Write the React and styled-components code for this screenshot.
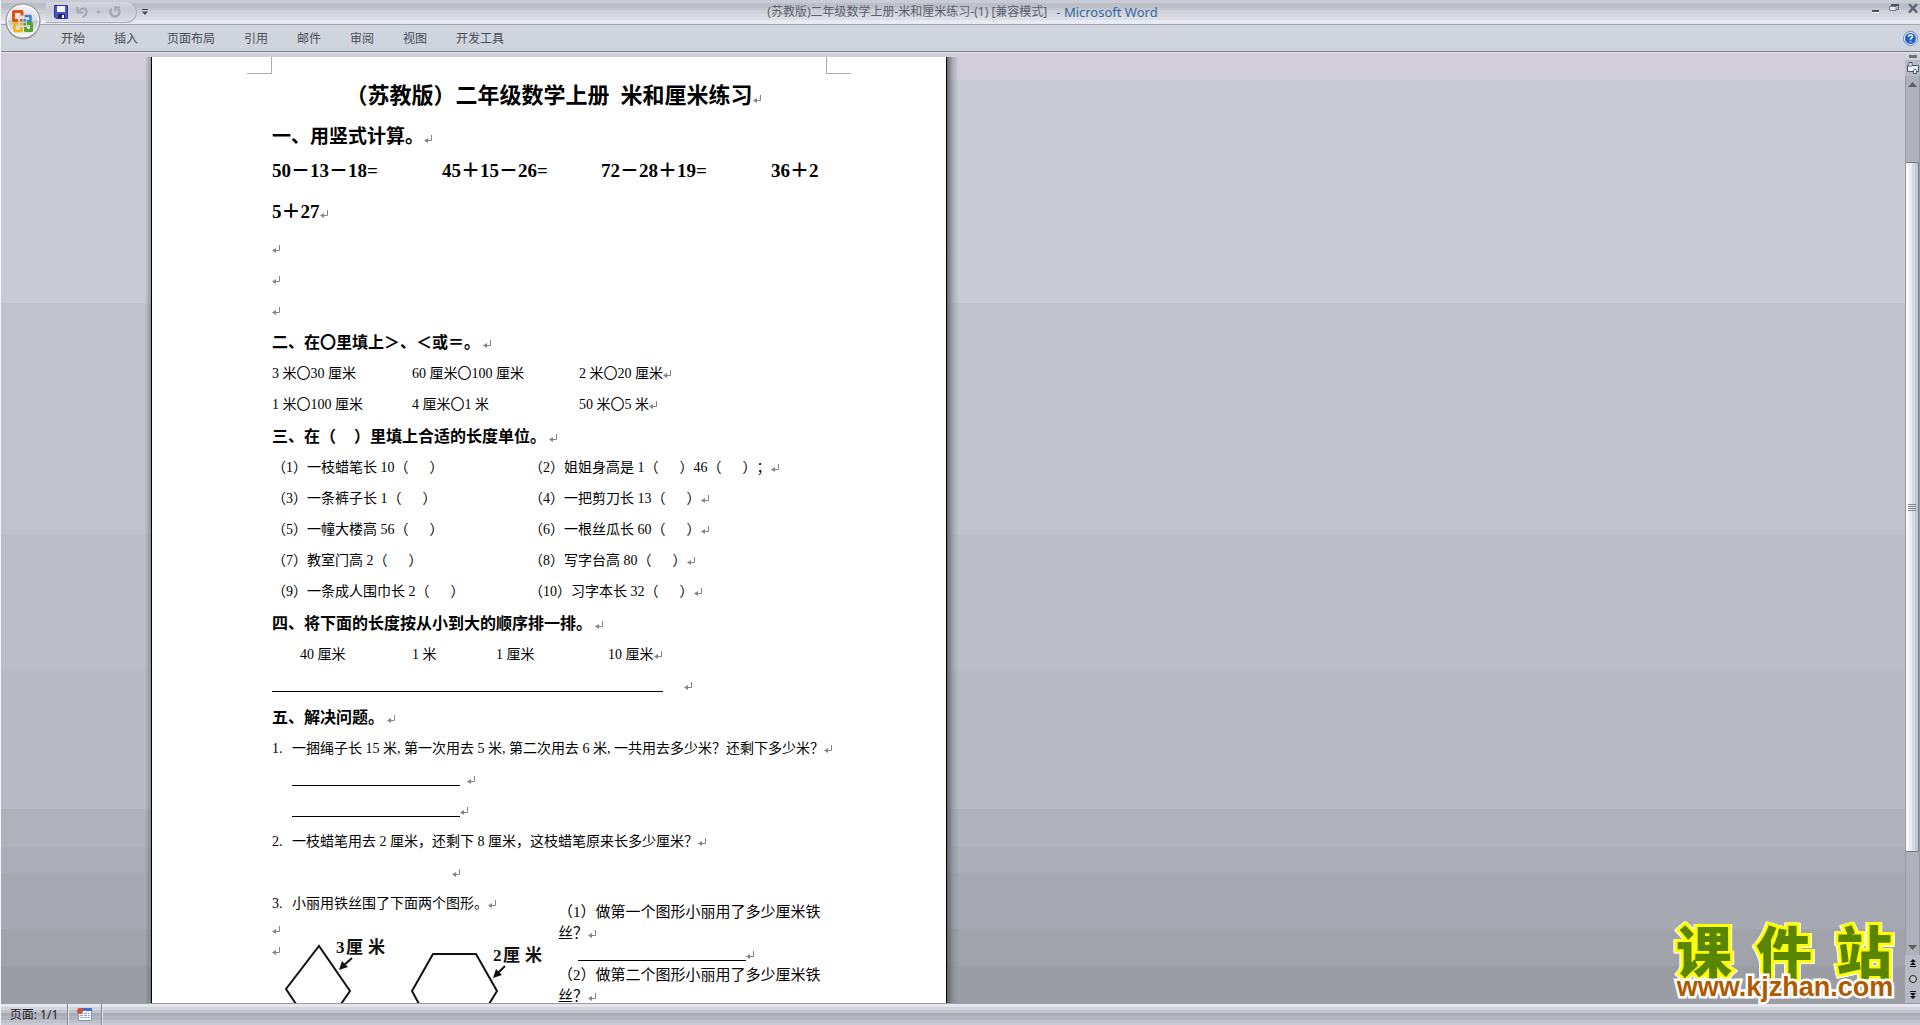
import React from "react";
import styled, { createGlobalStyle } from "styled-components";

const Global = createGlobalStyle`
  * { box-sizing: border-box; }
  html, body { margin: 0; padding: 0; overflow: hidden; }
  button { border: 0; padding: 0; margin: 0; background: none; font: inherit; color: inherit; }
  p, h1, h2, ol { margin: 0; padding: 0; font-weight: 400; }
`;

const Window = styled.div`
  display: flex;
  flex-direction: column;
  height: 100vh;
  border-left: 1px solid #f4f5f8;
  font-family: "Noto Sans", "Noto Sans CJK SC", sans-serif;
  font-size: 12px;
  color: #454b57;
`;

/* ---------- title bar and ribbon ---------- */

const TitleBar = styled.header`
  display: grid;
  grid-template-columns: 1fr auto 1fr;
  align-items: center;
  height: 25px;
  flex: none;
  border-bottom: 1px solid #a3a6af;
  background: linear-gradient(
    #c9ccd6 0 3px, #bcbfc8 3px 8px, #c3c6cf 8px 10px, #cdd0d8 10px 14px,
    #d5d8de 14px 17px, #dcdee3 17px 20px, #e7eaf3 20px
  );
`;

const QuickAccess = styled.div`
  display: flex;
  align-items: center;
  height: 24px;
  padding-left: 45px;
`;

const QuickPill = styled.div`
  display: flex;
  align-items: center;
  gap: 8px;
  height: 22px;
  padding: 0 15px 0 8px;
  border: 1px solid #aeb1bb;
  border-top-color: #c6c9d2;
  border-left: 0;
  border-radius: 0 11px 11px 0;
  background: linear-gradient(#d3d6de, #c7cad3 40%, #dcdfe6);
`;

const IconButton = styled.button`
  display: flex;
  align-items: center;
  justify-content: center;
`;

const MoreButton = styled(IconButton)`
  margin-left: 5px;
`;

const WindowTitle = styled.div`
  display: flex;
  gap: 9px;
  padding-left: 4px;
  line-height: 20px;
  white-space: pre;
  color: #5b616c;
`;

const AppName = styled.span`
  color: #3468a4;
  font-size: 13px;
`;

const WindowButtons = styled.div`
  display: flex;
  justify-content: flex-end;
  gap: 9px;
  padding: 0 2px 8px 0;
`;

const Ribbon = styled.nav`
  display: flex;
  align-items: center;
  justify-content: space-between;
  height: 28px;
  flex: none;
  padding: 0 2px 0 60px;
  background: #d0d4dd;
  border-bottom: 1px solid #e4e6ec;
  box-shadow: inset 0 -1px 0 #7a7f86;
`;

const Tabs = styled.div`
  display: flex;
  gap: 29px;
`;

const Tab = styled.button`
  line-height: 24px;
  color: #474d59;
`;

const OfficeButton = styled.button`
  position: absolute;
  left: 5px;
  top: 3px;
  width: 36px;
  height: 38px;
`;

/* ---------- workspace ---------- */

const Workspace = styled.main`
  display: flex;
  flex: 1;
  min-height: 0;
  background: linear-gradient(
    #d1ced9 0 2.8%, #c8cbd4 2.8% 26.3%, #c0c3cc 26.3% 50.6%, #bbbec8 50.6% 64.7%,
    #b8bbc5 64.7% 79.6%, #afb2bb 79.6% 83.6%, #abaeb7 83.6% 86.3%, #a6a9b1 86.3% 92.2%,
    #a0a3aa 92.2% 96.1%, #9a9da4 96.1%
  );
`;

const Desk = styled.div`
  display: flex;
  flex: 1;
  min-width: 0;
  overflow: hidden;
  padding: 4px 0 0 144px;
`;

const PageEdge = styled.div`
  flex: none;
  width: ${(p) => (p.$side === "left" ? "6px" : "12px")};
  background: ${(p) =>
    p.$side === "left"
      ? "linear-gradient(to right, rgba(90,92,98,0), rgba(90,92,98,.45))"
      : "linear-gradient(to right, rgba(85,88,92,.85), rgba(110,118,125,.35) 50%, rgba(110,118,125,0))"};
`;

const Page = styled.article`
  flex: none;
  width: 796px;
  border: solid #000;
  border-width: 0 1px;
  background: #fff;
  color: #000;
  font-family: "Liberation Serif", "Noto Sans CJK SC", serif;
  font-size: 14px;
  text-spacing-trim: space-all;
`;

const CropMarks = styled.div`
  display: flex;
  justify-content: space-between;
  padding: 0 95px;
`;

const CropMark = styled.div`
  width: 25px;
  height: 17px;
  border: solid #a9adb3;
  border-width: ${(p) => (p.$side === "left" ? "0 1px 1px 0" : "0 0 1px 1px")};
`;

const Body = styled.div`
  padding: 0 108px 0 120px;
`;

const Title = styled.h1`
  margin-bottom: 6px;
  padding-right: 4px;
  font-size: 22px;
  font-weight: 700;
  line-height: 43px;
  text-align: center;
  white-space: pre;
`;

const LeadHeading = styled.h2`
  font-size: 19px;
  font-weight: 700;
  line-height: 27px;
`;

const Heading = styled.h2`
  padding-top: 2px;
  font-size: 16px;
  font-weight: 700;
  line-height: 30px;
`;

const Equations = styled.p`
  display: grid;
  grid-template-columns: 170px 159px 170px auto;
  padding-bottom: 1px;
  font-size: 19px;
  font-weight: 700;
  line-height: 41px;
  white-space: nowrap;
`;

const Line = styled.p`
  height: 31px;
  line-height: 31px;
  padding-left: ${(p) => p.$indent || 0}px;
  white-space: nowrap;
`;

const Columns = styled(Line)`
  display: grid;
  grid-template-columns: ${(p) => p.$cols};
`;

const Blank = styled.span`
  display: inline-block;
  width: ${(p) => p.$width}px;
  border-bottom: ${(p) => (p.$rule ? "1px solid #000" : "0")};
  vertical-align: ${(p) => (p.$rule ? "-2px" : "baseline")};
`;

const CommaBox = styled.span`
  display: inline-block;
  width: 7px;
`;

const Number = styled.span`
  display: inline-block;
  width: 20px;
`;

const MarkIcon = styled.svg`
  width: 8px;
  height: 8px;
  margin-left: ${(p) => p.$gap || 0}px;
  vertical-align: baseline;
`;

const Finale = styled.div`
  display: grid;
  grid-template-columns: 286px 1fr;
`;

const FigureColumn = styled.div`
  position: relative;
`;

const Tight = styled.p`
  height: 21px;
  line-height: 21px;
  padding-left: ${(p) => p.$indent || 0}px;
  white-space: nowrap;
`;

const Figure = styled.svg`
  position: absolute;
  left: 8px;
  top: 41px;
`;

const TextBox = styled.div`
  padding-top: 14px;
  font-size: 15px;
`;

/* ---------- scroll bar ---------- */

const ScrollColumn = styled.aside`
  display: flex;
  flex-direction: column;
  width: 15px;
  flex: none;
  background: #b8bbc5;
`;

const Splitter = styled.div`
  height: 7px;
  padding: 2px 3px 2px 4px;
  background: #d0d3da;
  &::after { content: ""; display: block; height: 3px; background: #707379; }
`;

const Track = styled.div`
  display: flex;
  flex-direction: column;
  flex: 1;
  border: solid #989ba4;
  border-width: 0 1px;
  background: #aeb1ba;
`;

const ScrollButton = styled(IconButton)`
  height: ${(p) => p.$h}px;
  flex: none;
`;

const Thumb = styled.div`
  display: flex;
  flex-direction: column;
  align-items: center;
  justify-content: center;
  gap: 1px;
  flex: 690 0 0;
  border: 1px solid #777b82;
  border-left-width: 0;
  border-radius: 1px;
  background: linear-gradient(to right, #fdf8ee 0 3px, #e9edf6 3px 6px, #d5d9e3 6px 9px, #c2c7d1 9px);
`;

const Grip = styled.i`
  width: 8px;
  height: 1px;
  background: #868a92;
`;

const Space = styled.div`
  flex: ${(p) => p.$grow} 0 0;
`;

/* ---------- status bar ---------- */

const StatusBar = styled.footer`
  display: flex;
  height: 22px;
  flex: none;
  border-top: 1px solid #9a9da1;
  background: linear-gradient(#e4e6ec 0 3px, #d2d4dc 3px 6px, #c1c4cd 6px 9px, #a9acb5 9px 12px, #b2b5be 12px 16px, #bfc2cb 16px 19px, #c8cbd4 19px);
`;

const StatusCell = styled.div`
  display: flex;
  align-items: center;
  justify-content: center;
  width: ${(p) => p.$width}px;
  border-right: 1px solid #85888f;
  box-shadow: 1px 0 0 #e6e8ee;
  color: #1f2228;
  line-height: 20px;
`;

/* ---------- site badge ---------- */

const Badge = styled.a`
  position: absolute;
  right: 22px;
  bottom: 24px;
  width: 226px;
  text-decoration: none;
`;

const BadgeName = styled.span`
  display: flex;
  justify-content: space-between;
  padding: 0 6px 0 4px;
  font: 900 56px/50px "Noto Sans CJK SC", sans-serif;
  color: #5a8500;
  paint-order: stroke fill;
  -webkit-text-stroke: 6px #ffff00;
  filter: drop-shadow(1px 0 0 #fff) drop-shadow(-1px 0 0 #fff) drop-shadow(0 1px 0 #fff);
`;

const BadgeUrl = styled.span`
  display: block;
  position: relative;
  font: 700 27px/27px "Liberation Sans", sans-serif;
  color: #b05a00;
  text-align: center;
  paint-order: stroke fill;
  -webkit-text-stroke: 5px #fff;
`;

/* ---------- small drawings ---------- */

const Mark = ({ gap }) => (
  <MarkIcon viewBox="0 0 8 8" $gap={gap} aria-hidden="true">
    <path d="M7.5 0V5.5H1" fill="none" stroke="#858585" />
    <path d="M4 3v5L0 5.5z" fill="#858585" />
  </MarkIcon>
);

const Comma = () => <CommaBox>,</CommaBox>;
const Paren = ({ w = 21 }) => (
  <>（<Blank $width={w} />）</>
);

const OfficeLogo = () => (
  <svg width="36" height="38" viewBox="0 0 36 38">
    <defs>
      <linearGradient id="orb" x2="0" y2="1">
        <stop offset="0" stopColor="#f7f7f9" />
        <stop offset=".48" stopColor="#d9dbe0" />
        <stop offset=".5" stopColor="#c3c5cc" />
        <stop offset="1" stopColor="#fbfbfc" />
      </linearGradient>
    </defs>
    <circle cx="18" cy="19.5" r="17" fill="#7d8087" opacity=".55" />
    <circle cx="18" cy="18" r="17" fill="url(#orb)" stroke="#85888f" />
    <circle cx="18" cy="18" r="15.5" fill="none" stroke="#fff" />
    <g fill="none" strokeLinejoin="round">
      <path d="M13 17.500H8.500V8.500H17V12.500" stroke="#e2500f" strokeWidth="3" />
      <path d="M19.500 13H25.500V18H22" stroke="#3f83cc" strokeWidth="2.500" />
      <path d="M13 20.500H9.500V28H16.500V24.500" stroke="#f5b400" strokeWidth="2.500" />
      <path d="M22 20.500H26.500V27.500H20.500V24" stroke="#55a32a" strokeWidth="3" />
    </g>
    <rect x="15" y="16" width="2.500" height="2.500" fill="#e2500f" />
    <rect x="18.500" y="16" width="2.500" height="2.500" fill="#3f83cc" />
    <rect x="15" y="20" width="2.500" height="2.500" fill="#f5b400" />
    <rect x="18.500" y="20" width="2.500" height="2.500" fill="#55a32a" />
  </svg>
);

const SaveIcon = () => (
  <svg width="14" height="14" viewBox="0 0 14 14">
    <path d="M.5.500h13v13H2L.500 12z" fill="#4a56c4" stroke="#2c3490" />
    <path d="M3 1h8v6H3z" fill="#f3f6fd" />
    <path d="M4 9h7v4H4z" fill="#1e2468" />
    <path d="M8 10h2v3H8z" fill="#fff" />
  </svg>
);

const UndoIcon = () => (
  <svg width="12" height="12" viewBox="0 0 12 12" fill="none" stroke="#a5a8b2" strokeWidth="2">
    <path d="M3 5C6 1 10.500 2 10.500 5.500C10.500 8 9 10 6.500 11" />
    <path d="M1.500 1v5.500H7" />
  </svg>
);

const RedoIcon = () => (
  <svg width="12" height="12" viewBox="0 0 12 12" fill="none" stroke="#a5a8b2" strokeWidth="2.500">
    <path d="M2.500 2.500C0 6 2 10.500 6 10.500S11.500 6 9 3" />
    <path d="M6.500 0v5" strokeWidth="2" />
    <path d="M6 1.500h5" strokeWidth="2" />
  </svg>
);

const Triangle = ({ up, color = "#5c6067", w = 9, h = 5 }) => (
  <svg width={w} height={h} viewBox="0 0 9 5" preserveAspectRatio="none">
    <path d={up ? "M0 5L4.500 0L9 5z" : "M0 0L4.500 5L9 0z"} fill={color} />
  </svg>
);

const PageJump = ({ up }) => (
  <svg width="6" height="8" viewBox="0 0 6 8" transform={up ? undefined : "scale(1 -1)"}>
    <path d="M3 0L6 3H0zM3 3L6 6H0zM0 7h6v1H0z" fill="#111" />
  </svg>
);

const Shapes = () => (
  <Figure width="278" height="75" viewBox="280 930 278 75">
    <g fill="none" stroke="#111" strokeWidth="2">
      <path d="M296 1005L286 990L319 947L350 992L341 1005" />
      <path d="M419 1005L412 992L433 955H476L497 992L489 1005" />
      <path d="M352 959L343 967M505 967L497 975" />
    </g>
    <path d="M339 971L342 962L348 968zM493 979L496 970L502 976z" fill="#111" />
    <g fontFamily='"Liberation Serif", "Noto Sans CJK SC", serif' fontSize="17" fontWeight="700" fill="#111">
      <text x="336" y="954">3</text>
      <text x="346" y="954">厘</text>
      <text x="368" y="954">米</text>
      <text x="493" y="962">2</text>
      <text x="503" y="962">厘</text>
      <text x="525" y="962">米</text>
    </g>
  </Figure>
);

/* ---------- content ---------- */

const tabs = ["开始", "插入", "页面布局", "引用", "邮件", "审阅", "视图", "开发工具"];

const compare = [
  ["3 米〇30 厘米", "60 厘米〇100 厘米", "2 米〇20 厘米"],
  ["1 米〇100 厘米", "4 厘米〇1 米", "50 米〇5 米"],
];

const units = [
  ["（1）一枝蜡笔长 10", "（2）姐姐身高是 1", true],
  ["（3）一条裤子长 1", "（4）一把剪刀长 13"],
  ["（5）一幢大楼高 56", "（6）一根丝瓜长 60"],
  ["（7）教室门高 2", "（8）写字台高 80"],
  ["（9）一条成人围巾长 2", "（10）习字本长 32"],
];

export default function App() {
  return (
    <Window>
      <Global />
      <TitleBar>
        <QuickAccess>
          <QuickPill>
            <IconButton aria-label="保存"><SaveIcon /></IconButton>
            <IconButton aria-label="撤消"><UndoIcon /></IconButton>
            <IconButton aria-label="撤消列表"><Triangle w={5} h={3} color="#a5a8b2" /></IconButton>
            <IconButton aria-label="恢复"><RedoIcon /></IconButton>
          </QuickPill>
          <MoreButton aria-label="自定义快速访问工具栏">
            <svg width="6" height="6" viewBox="0 0 6 6"><path d="M0 0h6v1H0zM0 2.500h6L3 6z" fill="#454a53" /></svg>
          </MoreButton>
        </QuickAccess>
        <WindowTitle>
          <span>(苏教版)二年级数学上册-米和厘米练习-(1) [兼容模式]</span>
          <AppName>- Microsoft Word</AppName>
        </WindowTitle>
        <WindowButtons>
          <IconButton aria-label="最小化">
            <svg width="8" height="9"><path d="M0 6h7v2H0z" fill="#4f5259" /><path d="M0 8h7v1H0z" fill="#fff" /></svg>
          </IconButton>
          <IconButton aria-label="还原">
            <svg width="10" height="9">
              <path d="M2.500 5V.500h7v5H7" fill="none" stroke="#60666f" />
              <path d="M2 0h8v2H2z" fill="#4f5259" />
              <path d="M.500 2.500h6.500v4H.500z" fill="#e6e9f0" stroke="#6d7c94" />
            </svg>
          </IconButton>
          <IconButton aria-label="关闭">
            <svg width="10" height="9"><path d="M1 0L9 8.500M9 0L1 8.500" stroke="#5c6577" strokeWidth="2.500" /></svg>
          </IconButton>
        </WindowButtons>
      </TitleBar>
      <OfficeButton aria-label="Office"><OfficeLogo /></OfficeButton>
      <Ribbon>
        <Tabs>
          {tabs.map((t) => <Tab key={t}>{t}</Tab>)}
        </Tabs>
        <IconButton aria-label="帮助">
          <svg width="15" height="15" viewBox="0 0 15 15">
            <circle cx="7.500" cy="7.500" r="7" fill="#e8f0fb" stroke="#5d8bc4" />
            <circle cx="7.500" cy="7.500" r="5.500" fill="#1f5fd0" />
            <path d="M5.500 6C5.500 3.500 9.500 3.500 9.500 5.700C9.500 7 7.500 7 7.500 8.700M7.500 10v1.300" fill="none" stroke="#fff" strokeWidth="1.500" />
          </svg>
        </IconButton>
      </Ribbon>

      <Workspace>
        <Desk>
          <PageEdge $side="left" />
          <Page>
            <CropMarks>
              <CropMark $side="left" />
              <CropMark $side="right" />
            </CropMarks>
            <Body>
              <Title>（苏教版）二年级数学上册  米和厘米练习<Mark /></Title>
              <LeadHeading>一、用竖式计算。<Mark /></LeadHeading>
              <Equations>
                <span>50－13－18=</span>
                <span>45＋15－26=</span>
                <span>72－28＋19=</span>
                <span>36＋2</span>
                <span>5＋27<Mark /></span>
              </Equations>
              <Line><Mark /></Line>
              <Line><Mark /></Line>
              <Line><Mark /></Line>

              <Heading>二、在〇里填上＞、＜或＝。<Mark gap={3} /></Heading>
              {compare.map((row) => (
                <Columns key={row[0]} $cols="140px 167px auto">
                  <span>{row[0]}</span>
                  <span>{row[1]}</span>
                  <span>{row[2]}<Mark /></span>
                </Columns>
              ))}

              <Heading>三、在<Paren w={18} />里填上合适的长度单位。<Mark gap={3} /></Heading>
              {units.map(([left, right, extra]) => (
                <Columns key={left} $cols="257px auto">
                  <span>{left}<Paren /></span>
                  <span>
                    {right}<Paren />{extra && <>46<Paren />；</>}<Mark />
                  </span>
                </Columns>
              ))}

              <Heading>四、将下面的长度按从小到大的顺序排一排。<Mark gap={3} /></Heading>
              <Columns $indent={28} $cols="112px 84px 112px auto">
                <span>40 厘米</span>
                <span>1 米</span>
                <span>1 厘米</span>
                <span>10 厘米<Mark /></span>
              </Columns>
              <Line><Blank $width={391} $rule /><Mark gap={21} /></Line>

              <Heading>五、解决问题。<Mark gap={3} /></Heading>
              <Line>
                <Number>1.</Number>一捆绳子长 15 米<Comma />第一次用去 5 米<Comma />第二次用去 6 米<Comma />一共用去多少米？还剩下多少米？<Mark />
              </Line>
              <Line $indent={20}><Blank $width={168} $rule /><Mark gap={7} /></Line>
              <Line $indent={20}><Blank $width={168} $rule /><Mark /></Line>
              <Line><Number>2.</Number>一枝蜡笔用去 2 厘米，还剩下 8 厘米，这枝蜡笔原来长多少厘米？<Mark /></Line>
              <Line $indent={180}><Mark /></Line>

              <Finale>
                <FigureColumn>
                  <Line><Number>3.</Number>小丽用铁丝围了下面两个图形。<Mark /></Line>
                  <Tight><Mark /></Tight>
                  <Tight><Mark /></Tight>
                  <Shapes />
                </FigureColumn>
                <TextBox>
                  <Tight>（1）做第一个图形小丽用了多少厘米铁</Tight>
                  <Tight>丝？<Mark /></Tight>
                  <Tight $indent={20}><Blank $width={168} $rule /><Mark /></Tight>
                  <Tight>（2）做第二个图形小丽用了多少厘米铁</Tight>
                  <Tight>丝？<Mark /></Tight>
                </TextBox>
              </Finale>
            </Body>
          </Page>
          <PageEdge $side="right" />
        </Desk>

        <ScrollColumn>
          <Splitter />
          <ScrollButton $h={16} aria-label="标尺">
            <svg width="12" height="12" viewBox="0 0 12 12">
              <path d="M.500 3.500h11v6H.500z" fill="#f2f0fa" stroke="#3c5576" />
              <path d="M2 .500h3v3L3.500 5L2 3.500zM6.500 11.500h3v-3L8 7L6.500 8.500z" fill="#fff" stroke="#3c5576" />
            </svg>
          </ScrollButton>
          <Track>
            <ScrollButton $h={16} aria-label="向上滚动"><Triangle up /></ScrollButton>
            <Space $grow={70} />
            <Thumb><Grip /><Grip /><Grip /><Grip /></Thumb>
            <Space $grow={87} />
            <ScrollButton $h={16} aria-label="向下滚动"><Triangle /></ScrollButton>
          </Track>
          <ScrollButton $h={16} aria-label="前一页"><PageJump up /></ScrollButton>
          <ScrollButton $h={16} aria-label="选择浏览对象">
            <svg width="8" height="8"><circle cx="4" cy="4" r="3.500" fill="#c4c6ca" stroke="#222" /></svg>
          </ScrollButton>
          <ScrollButton $h={16} aria-label="下一页"><PageJump /></ScrollButton>
        </ScrollColumn>
      </Workspace>

      <StatusBar>
        <StatusCell $width={67}>页面: 1/1</StatusCell>
        <StatusCell $width={34}>
          <svg width="15" height="13" viewBox="0 0 15 13">
            <path d="M1.500.500h13v12h-13z" fill="#fff" stroke="#8297bd" />
            <path d="M5 0h10v3H5z" fill="#3f6fd0" />
            <path d="M3 5.500h10M3 7.500h10M3 9.500h10" stroke="#8ba4d4" strokeDasharray="3 1" />
            <circle cx="3" cy="3" r="3" fill="#d9502c" />
          </svg>
        </StatusCell>
      </StatusBar>

      <Badge href="#">
        <BadgeName><span>课</span><span>件</span><span>站</span></BadgeName>
        <BadgeUrl>www.kjzhan.com</BadgeUrl>
      </Badge>
    </Window>
  );
}
